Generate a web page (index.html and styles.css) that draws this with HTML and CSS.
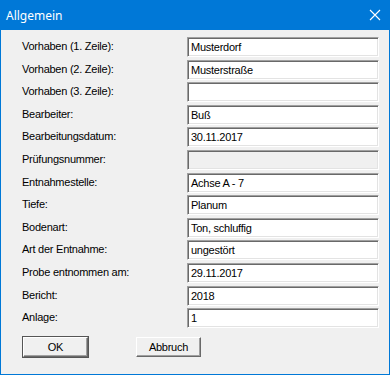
FILE: index.html
```
<!doctype html>
<html>
<head>
  <title>Allgemein</title>
  <link rel="stylesheet" href="styles.css">
</head>
<body>

	<div class="dialog">
		<div class="titlebar">
			<span class="title">Allgemein</span>
			<svg class="close" width="12" height="12" viewBox="0 0 12 12">
				<path d="M1 1 L11 11 M11 1 L1 11" stroke="#fff" stroke-width="1.1" fill="none"/>
			</svg>
		</div>

		<div class="content">
			<div class="form">
				<label>Vorhaben (1. Zeile):</label>
				<div class="field">Musterdorf</div>

				<label>Vorhaben (2. Zeile):</label>
				<div class="field">Musterstraße</div>

				<label>Vorhaben (3. Zeile):</label>
				<div class="field"></div>

				<label>Bearbeiter:</label>
				<div class="field">Buß</div>

				<label>Bearbeitungsdatum:</label>
				<div class="field">30.11.2017</div>

				<label>Prüfungsnummer:</label>
				<div class="field disabled"></div>

				<label>Entnahmestelle:</label>
				<div class="field">Achse A - 7</div>

				<label>Tiefe:</label>
				<div class="field">Planum</div>

				<label>Bodenart:</label>
				<div class="field">Ton, schluffig</div>

				<label>Art der Entnahme:</label>
				<div class="field">ungestört</div>

				<label>Probe entnommen am:</label>
				<div class="field">29.11.2017</div>

				<label>Bericht:</label>
				<div class="field">2018</div>

				<label>Anlage:</label>
				<div class="field">1</div>
			</div>

			<div class="buttons">
				<button class="btn default">OK</button>
				<button class="btn">Abbruch</button>
			</div>
		</div>
	</div>

</body>
</html>
```

FILE: styles.css
```
	html, body {height: 100%}
	body {margin: 0; padding: 0; background: #fff;}

	.dialog {
		width: 390px;
		height: 375px;
		box-sizing: border-box;
		border: 1px solid #0078d7;
		border-top: 0;
		background: #f0f0f0;
		font-family: "Liberation Sans", Arial, sans-serif;
		font-size: 11px;
		letter-spacing: -0.25px;
		color: #000;
		display: flex;
		flex-direction: column;
	}

	.titlebar {
		height: 30px;
		margin: 0 -1px;
		background: #0078d7;
		color: #fff;
		display: flex;
		align-items: center;
		justify-content: space-between;
		padding: 0 9px 0 6px;
		letter-spacing: 0;
	}
	.title {
		font-family: "Noto Sans", "Liberation Sans", sans-serif;
		font-size: 12px;
	}
	.close {
		display: block;
	}

	.content {
		padding: 7px 10px 0 21px;
	}

	.form {
		display: grid;
		grid-template-columns: 165px 192px;
		grid-auto-rows: 20px;
		row-gap: 2.6px;
		align-items: center;
	}
	.form label {
		align-self: center;
		margin-top: -2px;
	}

	.field {
		height: 20px;
		box-sizing: border-box;
		background: #fff;
		border-top: 1px solid #a0a0a0;
		border-left: 1px solid #a0a0a0;
		border-right: 1px solid #fff;
		border-bottom: 1px solid #fff;
		box-shadow: inset 1px 1px 0 #696969, inset -1px -1px 0 #e3e3e3;
		padding: 0 3px;
		line-height: 18px;
		white-space: nowrap;
		overflow: hidden;
	}
	.field.disabled {
		background: #f0f0f0;
	}

	.buttons {
		display: flex;
		gap: 48px;
		margin-top: 9px;
		padding-left: 1px;
	}
	.btn {
		width: 65px;
		height: 20px;
		padding: 0;
		font-family: "Liberation Sans", Arial, sans-serif;
		font-size: 11px;
		letter-spacing: -0.25px;
		color: #000;
		background: #f0f0f0;
		border-top: 1px solid #fff;
		border-left: 1px solid #fff;
		border-right: 1px solid #696969;
		border-bottom: 1px solid #696969;
		box-shadow: inset -1px -1px 0 #a0a0a0;
	}
	.btn.default {
		outline: 1px solid #555;
	}
```
